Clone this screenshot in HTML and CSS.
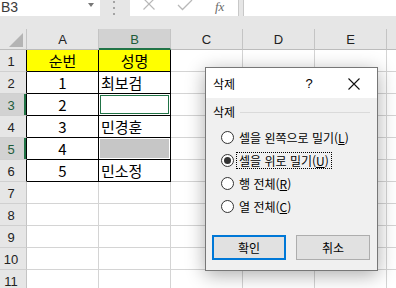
FILE: index.html
```html
<!DOCTYPE html>
<html lang="ko">
<head>
<meta charset="utf-8">
<title>삭제</title>
<link rel="stylesheet" href="styles.css">
</head>
<body>
<div class="app">
  <div class="fbar">
    <div class="namebox"><span class="ref">B3</span><span class="dd"></span></div>
    <div class="grip"><svg width="4" height="16" viewBox="0 0 4 16"><rect x="1" y="1" width="2" height="2" fill="#a3a3a3"/><rect x="1" y="7" width="2" height="2" fill="#a3a3a3"/><rect x="1" y="13" width="2" height="2" fill="#a3a3a3"/></svg></div>
    <div class="fbtns">
      <svg class="ico-x" width="14" height="14" viewBox="0 0 14 14"><path d="M1.5 1.5 L12.5 12.5 M12.5 1.5 L1.5 12.5" stroke="#b8b8b8" stroke-width="1.2" fill="none"/></svg>
      <svg class="ico-ok" width="16" height="12" viewBox="0 0 16 12"><path d="M1 6 L5.5 10.5 L15 1" stroke="#b8b8b8" stroke-width="1.3" fill="none"/></svg>
      <span class="fx">fx</span>
    </div>
    <div class="finput"></div>
  </div>

  <div class="sheet">
    <div class="hd corner"><span class="tri"></span></div>
    <div class="hd">A</div>
    <div class="hd sel">B</div>
    <div class="hd">C</div>
    <div class="hd">D</div>
    <div class="hd">E</div>
    <div class="hd last"></div>

    <div class="rh tb">1</div>
    <div class="c t yel ctr">순번</div>
    <div class="c t yel ctr">성명</div>
    <div class="c"></div><div class="c"></div><div class="c"></div><div class="c last"></div>

    <div class="rh tb">2</div>
    <div class="c t ctr">1</div>
    <div class="c t txt">최보검</div>
    <div class="c"></div><div class="c"></div><div class="c"></div><div class="c last"></div>

    <div class="rh tb rsel">3</div>
    <div class="c t ctr">2</div>
    <div class="c t"><div class="active"></div></div>
    <div class="c"></div><div class="c"></div><div class="c"></div><div class="c last"></div>

    <div class="rh tb">4</div>
    <div class="c t ctr">3</div>
    <div class="c t txt">민경훈</div>
    <div class="c"></div><div class="c"></div><div class="c"></div><div class="c last"></div>

    <div class="rh tb rsel">5</div>
    <div class="c t ctr">4</div>
    <div class="c t"><div class="shade"></div></div>
    <div class="c"></div><div class="c"></div><div class="c"></div><div class="c last"></div>

    <div class="rh tb">6</div>
    <div class="c t ctr">5</div>
    <div class="c t txt">민소정</div>
    <div class="c"></div><div class="c"></div><div class="c"></div><div class="c last"></div>

    <div class="rh">7</div>
    <div class="c"></div><div class="c"></div><div class="c"></div><div class="c"></div><div class="c"></div><div class="c last"></div>
    <div class="rh">8</div>
    <div class="c"></div><div class="c"></div><div class="c"></div><div class="c"></div><div class="c"></div><div class="c last"></div>
    <div class="rh">9</div>
    <div class="c"></div><div class="c"></div><div class="c"></div><div class="c"></div><div class="c"></div><div class="c last"></div>
    <div class="rh">10</div>
    <div class="c"></div><div class="c"></div><div class="c"></div><div class="c"></div><div class="c"></div><div class="c last"></div>
    <div class="rh">11</div>
    <div class="c"></div><div class="c"></div><div class="c"></div><div class="c"></div><div class="c"></div><div class="c last"></div>
  </div>

  <div class="dialog">
    <div class="dtitle">
      <span class="dname">삭제</span>
      <span class="help">?</span>
      <svg class="close" width="12" height="12" viewBox="0 0 12 12"><path d="M0.5 0.5 L11.5 11.5 M11.5 0.5 L0.5 11.5" stroke="#111" stroke-width="1.1" fill="none"/></svg>
    </div>
    <div class="dbody">
      <div class="group"><span>삭제</span><span class="rule"></span></div>
      <div class="opts">
        <div class="opt"><span class="radio"></span><span class="lbl">셀을 왼쪽으로 밀기(<u>L</u>)</span></div>
        <div class="opt"><span class="radio on"></span><span class="lbl focus">셀을 위로 밀기(<u>U</u>)</span></div>
        <div class="opt"><span class="radio"></span><span class="lbl">행 전체(<u>R</u>)</span></div>
        <div class="opt"><span class="radio"></span><span class="lbl">열 전체(<u>C</u>)</span></div>
      </div>
      <div class="btns">
        <div class="btn def">확인</div>
        <div class="btn">취소</div>
      </div>
    </div>
  </div>
</div>
</body>
</html>
```
FILE: styles.css
```css
* { box-sizing: border-box; }
html, body { margin: 0; padding: 0; }
body {
  width: 396px;
  height: 288px;
  overflow: hidden;
  background: #ffffff;
  font-family: "Noto Sans CJK KR", "Noto Sans", sans-serif;
}
.app {
  position: relative;
  width: 396px;
  height: 288px;
  overflow: hidden;
  background: #e6e6e6;
}

/* formula bar */
.fbar {
  display: flex;
  height: 16px;
  margin-bottom: 13px;
  background: #e6e6e6;
}
.namebox {
  width: 100px;
  background: #fff;
  display: flex;
  align-items: flex-start;
  padding-left: 1px;
}
.ref {
  font-family: "Liberation Sans", Arial, sans-serif;
  font-size: 14px;
  line-height: 14px;
  margin-top: 0;
  color: #3a3a3a;
}
.dd {
  width: 0;
  height: 0;
  border-left: 3.5px solid transparent;
  border-right: 3.5px solid transparent;
  border-top: 4px solid #777;
  margin-left: auto;
  margin-right: 6px;
  margin-top: 3px;
}
.grip {
  width: 30px;
  display: flex;
  justify-content: center;
  padding-right: 2px;
}
.fbtns {
  width: 109px;
  background: #fff;
  border-right: 1px solid #c8c8c8;
  display: flex;
  align-items: flex-start;
}
.ico-x { margin-left: 12px; margin-top: -3px; }
.ico-ok { margin-left: 21px; margin-top: -1px; }
.fx {
  font-family: "Liberation Serif", "DejaVu Serif", serif;
  font-style: italic;
  font-size: 13px;
  line-height: 13px;
  color: #6a6a6a;
  margin-left: 22px;
  margin-top: 0;
}
.finput {
  flex: 1;
  margin-left: 4px;
  background: #fff;
  border-left: 1px solid #c8c8c8;
}

/* sheet */
.sheet {
  display: grid;
  grid-template-columns: 27px 72px 72px 72px 72px 72px 1fr;
  grid-template-rows: 21px repeat(11, 22px);
  background: #fff;
}
.hd {
  background: #e6e6e6;
  border-right: 1px solid #c4c4c4;
  border-bottom: 1px solid #bcbcbc;
  font-family: "Liberation Sans", Arial, sans-serif;
  font-size: 13px;
  color: #222;
  display: flex;
  align-items: center;
  justify-content: center;
  padding-top: 1px;
}
.hd.last { border-right: none; }
.hd.sel {
  background: #d2d2d2;
  color: #1e5c3a;
  border-bottom: 2px solid #217346;
}
.corner {
  justify-content: flex-end;
  align-items: flex-end;
  padding: 0 3px 2px 0;
}
.tri {
  width: 14px;
  height: 14px;
  background: #b4b4b4;
  clip-path: polygon(100% 0, 100% 100%, 0 100%);
}
.rh {
  background: #e6e6e6;
  border-right: 1px solid #c4c4c4;
  border-bottom: 1px solid #d0d0d0;
  font-family: "Liberation Sans", Arial, sans-serif;
  font-size: 13px;
  color: #222;
  display: flex;
  align-items: center;
  justify-content: center;
  padding-right: 4px;
  padding-top: 1px;
}
.rh.tb { border-right-color: #000; }
.rh.rsel {
  background: #d2d2d2;
  color: #1e5c3a;
  box-shadow: inset -2px 0 0 #217346;
}
.c {
  border-right: 1px solid #d4d4d4;
  border-bottom: 1px solid #d4d4d4;
  font-size: 15px;
  line-height: 20px;
  color: #000;
  display: flex;
  align-items: center;
}
.c.last { border-right: none; }
.c.t {
  border-right-color: #000;
  border-bottom-color: #000;
}
.c.yel { background: #ffff00; }
.c.ctr { justify-content: center; }
.c.txt { padding-left: 2px; }
.active {
  flex: 1;
  align-self: stretch;
  margin: 1px;
  border: 1px solid #217346;
}
.shade {
  flex: 1;
  align-self: stretch;
  margin: 1px;
  background: #c6c6c6;
}

/* dialog */
.dialog {
  position: absolute;
  left: 205px;
  top: 67px;
  width: 173px;
  height: 204px;
  border: 1px solid #777;
  background: #f0f0f0;
  box-shadow: 0 4px 18px rgba(0, 0, 0, 0.33);
  display: flex;
  flex-direction: column;
  font-size: 12px;
  color: #000;
}
.dtitle {
  height: 30px;
  background: #fff;
  display: flex;
  align-items: center;
  padding: 1px 17px 0 7px;
}
.dname { flex: 1; font-size: 12px; }
.help {
  width: 20px;
  text-align: center;
  font-family: "Liberation Sans", Arial, sans-serif;
  font-size: 13px;
  margin-right: 29px;
}
.dbody {
  flex: 1;
  padding: 6px 7px 0 6px;
  display: flex;
  flex-direction: column;
}
.group {
  display: flex;
  align-items: center;
  gap: 5px;
  height: 16px;
  margin-left: 1px;
  line-height: 16px;
}
.rule {
  flex: 1;
  height: 1px;
  background: #dadada;
}
.opts {
  margin-top: 6px;
  padding-left: 9px;
  display: flex;
  flex-direction: column;
}
.opt {
  height: 23px;
  display: flex;
  align-items: center;
}
.radio {
  width: 13px;
  height: 13px;
  border-radius: 50%;
  border: 1px solid #333;
  background: #fff;
  display: flex;
  align-items: center;
  justify-content: center;
  flex: none;
}
.radio.on::after {
  content: "";
  width: 7px;
  height: 7px;
  border-radius: 50%;
  background: #333;
}
.lbl {
  margin-left: 2px;
  padding: 0 2px;
  border: 1px dotted transparent;
  line-height: 15px;
  white-space: nowrap;
}
.lbl.focus { border-color: #000; }
.lbl u { text-underline-offset: 1px; }
.btns {
  margin-top: 17px;
  display: flex;
  justify-content: space-between;
}
.btn {
  width: 74px;
  height: 25px;
  background: #e1e1e1;
  border: 1px solid #adadad;
  display: flex;
  align-items: center;
  justify-content: center;
  font-size: 12px;
}
.btn.def { border: 2px solid #0078d7; }
```
